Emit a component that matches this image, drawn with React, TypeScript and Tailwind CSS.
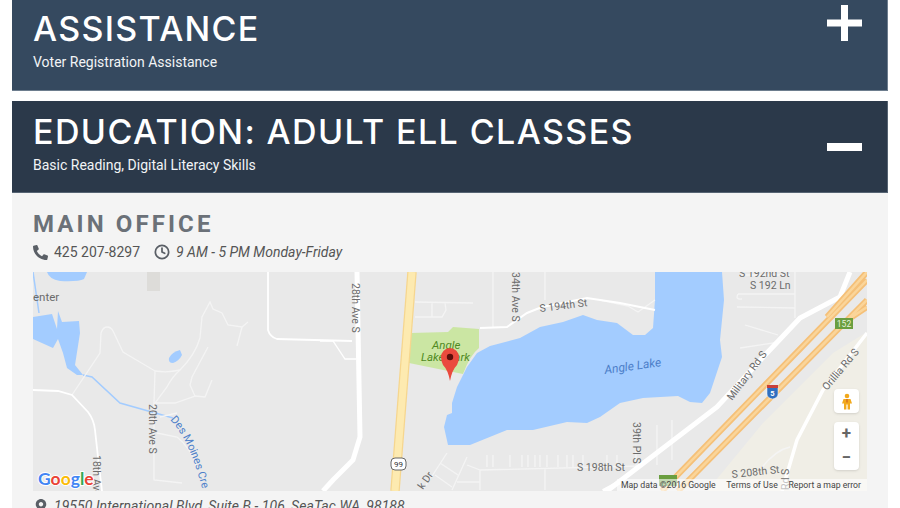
import { Clock } from "lucide-react";
import { FaMapMarkerAlt, FaPhone } from "react-icons/fa";

const thinRoads = [
  "M72 395L100 353L101 333Q103 327 107 327Q111 327 113 331L123 352L155 371Q168 373 180 370Q195 355 200 338L202 317L210 302L213 309L222 313L228 325L242 327L248 322",
  "M242 327L237 346",
  "M155 371L154 403V480L182 483",
  "M180 370Q172 377 167 387L155 403H175L195 396L190 385L192 377L208 347",
  "M195 396L205 397L212 380",
  "M157 433L177 437Q190 447 197 467",
  "M160 417L177 413",
  "M415 302L473 303M415 317H442L446 310L445 303M432 302V317",
  "M493 272V327M545 272V300",
  "M480 470L640 466M480 470V490M545 468V490M467 465L480 470M457 482H480",
  "M447 453L423 490M467 457L452 490M440 463L458 475M435 475L452 487",
  "M657 425V465M672 420V460M636 448V470",
  "M738 294H795M737 307L795 308M795 272V318M738 294Q735 300 742 299M745 325L778 335M740 348L780 342M760 470Q775 450 790 447",
  "M600 300L628 306L638 312L655 300",
  "M740 275H790",
];

const creeks = ["M33 272L39 313", "M83 375L92 377L120 403L173 418"];

const stubs = [487, 493, 510, 522, 528, 535, 540, 547, 558, 567, 573, 583, 607, 617];

const highways = "M662 491L867 280M678 491L867 300M827 317L867 272M840 325L867 307";

function MapDrawing() {
  return (
    <svg viewBox="33 272 834 219" className="block h-[219px] w-full" style={{ fontFamily: "Roboto, sans-serif" }}>
      <rect x="33" y="272" width="834" height="219" fill="#e9e9e9" />
      <path d="M707 491L763 423L833 353L867 332V491Z" fill="#f0eee6" />
      <rect x="147" y="272" width="13" height="19" fill="#dddcd9" />

      {/* water */}
      <path d="M47 272H87L84 279Q78 282 60 281Q49 279 47 272Z" fill="#a3ccff" />
      <path d="M33 317L52 314L57 329L58 311L62 322L79 321L80 333L75 365L83 375L77 375L67 368L63 353L58 339L53 348L33 339Z" fill="#a3ccff" />
      <path d="M169 358Q172 352 180 350L182 355Q179 361 173 363Q168 363 169 358Z" fill="#a3ccff" />
      {creeks.map((d) => (
        <path key={d} d={d} fill="none" stroke="#a3ccff" strokeWidth="1.5" />
      ))}
      <path
        d="M490 346L520 338L540 327L563 322L583 315L597 320L617 323L633 335L645 335L653 328L655 300V272H722L724 300L720 340L722 357L710 393L702 403L690 402L678 396L643 398L620 403L600 417L587 423L567 422L533 430L507 430L470 445L448 445L444 427L447 415L452 413L452 403L457 387L467 367L477 353Z"
        fill="#a3ccff"
      />

      {/* park */}
      <path d="M410 333L448 332L453 327L479 329V348Q470 355 463 374L409 363Z" fill="#cbe6a3" />

      {/* roads */}
      {thinRoads.map((d) => (
        <path key={d} d={d} fill="none" stroke="#f4f4f4" strokeWidth="1.3" />
      ))}
      {stubs.map((x) => (
        <path key={x} d={`M${x} 455V467`} stroke="#f8f8f8" strokeWidth="1" />
      ))}
      <path d="M268 272V330Q270 337 277 339L352 341" fill="none" stroke="#fff" strokeWidth="1.8" />
      <path d="M33 390L58 391L72 395L88 412Q94 420 95 430L98 457L102 491" fill="none" stroke="#fff" strokeWidth="1.8" />
      <path d="M320 341H333L345 359H356" fill="none" stroke="#fff" strokeWidth="1.3" />
      <path d="M480 328L507 327L527 313L542 307L587 298L620 303L655 310" fill="none" stroke="#fff" strokeWidth="2" />
      <path d="M357 272L360 437L353 460L333 480L323 491" fill="none" stroke="#fff" strokeWidth="5" />
      <path d="M607 491L717 407L767 353L800 318L840 297L850 272" fill="none" stroke="#fff" strokeWidth="5" />
      <path d="M782 491L797 440L823 390L867 333" fill="none" stroke="#fff" strokeWidth="3.5" />
      <path d="M603 491L620 482" stroke="#fff" strokeWidth="4" />

      <path d="M412 272L395 491" stroke="#f6d68e" strokeWidth="9.5" />
      <path d="M412 272L395 491" stroke="#fdeab0" strokeWidth="7" />
      <path d={highways} fill="none" stroke="#f5c078" strokeWidth="6" />
      <path d={highways} fill="none" stroke="#fad59a" strokeWidth="2.5" />

      {/* labels */}
      <g fill="#6b6b6b" fontSize="10.5">
        <text x="33" y="301" fontSize="11.5">enter</text>
        <text transform="translate(149 404) rotate(90)">20th Ave S</text>
        <text transform="translate(93 455) rotate(90)">18th Ave</text>
        <text transform="translate(352 283) rotate(90)">28th Ave S</text>
        <text transform="translate(512 272) rotate(90)">34th Ave S</text>
        <text transform="translate(540 312) rotate(-7)">S 194th St</text>
        <text x="577" y="471">S 198th St</text>
        <text transform="translate(633 422) rotate(90)">39th Pl S</text>
        <text transform="translate(423 490) rotate(-55)">k Dr</text>
        <text x="739" y="277">S 192nd St</text>
        <text x="750" y="289">S 192 Ln</text>
        <text transform="translate(732 401) rotate(-53)">Military Rd S</text>
        <text transform="translate(827 391) rotate(-50)">Orillia Rd S</text>
        <text transform="translate(732 478) rotate(-6)">S 208th St</text>
        <text transform="translate(789 490) rotate(-90)">Rd S</text>
      </g>
      <path id="creek-label" d="M170 420Q190 440 203 492" fill="none" />
      <text fill="#4d7fc9" fontSize="11">
        <textPath href="#creek-label">Des Moines Cre</textPath>
      </text>
      <text transform="translate(605 374) rotate(-8)" fill="#4d7fc9" fontSize="12" fontStyle="italic">Angle Lake</text>
      <g fill="#4f8a1f" fontSize="11.5" fontStyle="italic">
        <text x="432" y="349">Angle</text>
        <text x="421" y="361">Lake Park</text>
      </g>

      {/* shields */}
      <rect x="391" y="458" width="15" height="12" rx="4" fill="#fff" stroke="#666" />
      <text x="398.5" y="467" fontSize="8" textAnchor="middle" fill="#333">99</text>
      <rect x="835" y="318" width="18" height="11" fill="#6a9e3f" />
      <text x="844" y="327" fontSize="8.5" textAnchor="middle" fill="#e8f2dc">152</text>
      <rect x="659" y="475" width="18" height="11" fill="#6a9e3f" />
      <path d="M767 386H778V394Q778 398 772.5 399Q767 398 767 394Z" fill="#2f6fc0" stroke="#fff" strokeWidth="0.5" />
      <rect x="767" y="385" width="11" height="3" fill="#c8403a" />
      <text x="772.5" y="396" fontSize="7.5" fontWeight="700" textAnchor="middle" fill="#fff">5</text>

      {/* pin */}
      <path d="M450 381Q448 370 443 365Q441 361 441 357A9 9 0 0 1 459 357Q459 361 457 365Q452 370 450 381Z" fill="#ea4a3d" />
      <circle cx="450" cy="357" r="3.2" fill="#5c0f0c" />

      {/* logo */}
      <text x="38" y="485" fontSize="17.5" fontWeight="700" stroke="#fff" strokeWidth="2" paintOrder="stroke" fontFamily="Lato, sans-serif">
        <tspan fill="#4285f4">G</tspan>
        <tspan fill="#ea4335">o</tspan>
        <tspan fill="#fbbc05">o</tspan>
        <tspan fill="#4285f4">g</tspan>
        <tspan fill="#34a853">l</tspan>
        <tspan fill="#ea4335">e</tspan>
      </text>
    </svg>
  );
}

function MapControls() {
  return (
    <>
      <div className="absolute top-[117px] left-[801px] flex h-6 w-[25px] items-center justify-center rounded-sm bg-white shadow-sm">
        <svg viewBox="0 0 10 16" className="h-[17px] w-[10px]">
          <circle cx="5" cy="2.5" r="2.3" fill="#f2a91c" />
          <path d="M1.5 5.5H8.5L10 10H8V16H5.6V11H4.4V16H2V10H0Z" fill="#f2a91c" />
          <path d="M5 5.5V9" stroke="#c9501f" strokeWidth="1" />
        </svg>
      </div>
      <div className="absolute top-[150px] left-[801px] flex h-12 w-[25px] flex-col items-center rounded-sm bg-white shadow-sm">
        <div className="flex h-6 w-full items-center justify-center text-[17px] font-bold text-[#666]">+</div>
        <div className="h-px w-4 bg-[#e6e6e6]" />
        <div className="flex h-6 w-full items-center justify-center text-[17px] font-bold text-[#666]">−</div>
      </div>
      <div className="absolute right-0 bottom-0 flex h-3 w-[250px] items-center justify-between bg-white/60 pr-[6px] pl-1 text-[8.7px] leading-none whitespace-nowrap text-[#444]">
        <span>Map data ©2016 Google</span>
        <span>Terms of Use</span>
        <span>Report a map error</span>
      </div>
    </>
  );
}

export default function App() {
  return (
    <div className="h-[508px] overflow-hidden bg-white font-['Roboto',sans-serif]">
      <div className="mx-3 -mt-px flex h-[92px] justify-between border-r border-b border-[#6d7d8e] bg-[#35495f] pr-[25px] pl-[21px]">
        <div>
          <h2 className="mt-2 font-['Inter',sans-serif] text-[34px] leading-[44px] font-medium tracking-[1.3px] text-white">ASSISTANCE</h2>
          <p className="mt-[2px] text-sm leading-[18px] text-[#f2f4f6]">Voter Registration Assistance</p>
        </div>
        <svg viewBox="0 0 35 36" className="mt-[6px] h-9 w-[35px]" fill="#fff">
          <rect x="14" width="7" height="36" />
          <rect y="14.5" width="35" height="7" />
        </svg>
      </div>

      <div className="mx-3 mt-[10px] flex h-[92px] justify-between border-r border-b border-[#566473] bg-[#2b394a] pr-[25px] pl-[21px]">
        <div>
          <h2 className="mt-[9px] font-['Inter',sans-serif] text-[34px] leading-[44px] font-medium tracking-[1.4px] text-white">EDUCATION: ADULT ELL CLASSES</h2>
          <p className="mt-[2px] text-sm leading-[18px] text-[#f2f4f6]">Basic Reading, Digital Literacy Skills</p>
        </div>
        <div className="mt-[42px] h-2 w-[35px] bg-white" />
      </div>

      <section className="mx-3 bg-[#f4f4f4] px-[21px] pt-4">
        <h3 className="text-2xl leading-[30px] font-bold tracking-[3.1px] text-[#6b7178]">MAIN OFFICE</h3>
        <div className="mt-[2px] flex h-[22px] items-center text-sm text-[#555]">
          <FaPhone className="h-[15px] w-[15px] scale-x-[-1] text-[#5a5f66]" />
          <span className="ml-[6px]">425 207-8297</span>
          <Clock className="ml-[14px] h-4 w-4 text-[#5a5f66]" strokeWidth={2.6} />
          <em className="ml-[6px]">9 AM - 5 PM Monday-Friday</em>
        </div>
        <div className="relative mt-[9px]">
          <MapDrawing />
          <MapControls />
        </div>
        <div className="mt-[5px] flex items-center text-sm text-[#555]">
          <FaMapMarkerAlt className="ml-px h-[14px] w-[14px] text-[#5a5f66]" />
          <em className="ml-[6px] tracking-[0.05px]">19550 International Blvd, Suite B - 106, SeaTac WA, 98188</em>
        </div>
      </section>
    </div>
  );
}
